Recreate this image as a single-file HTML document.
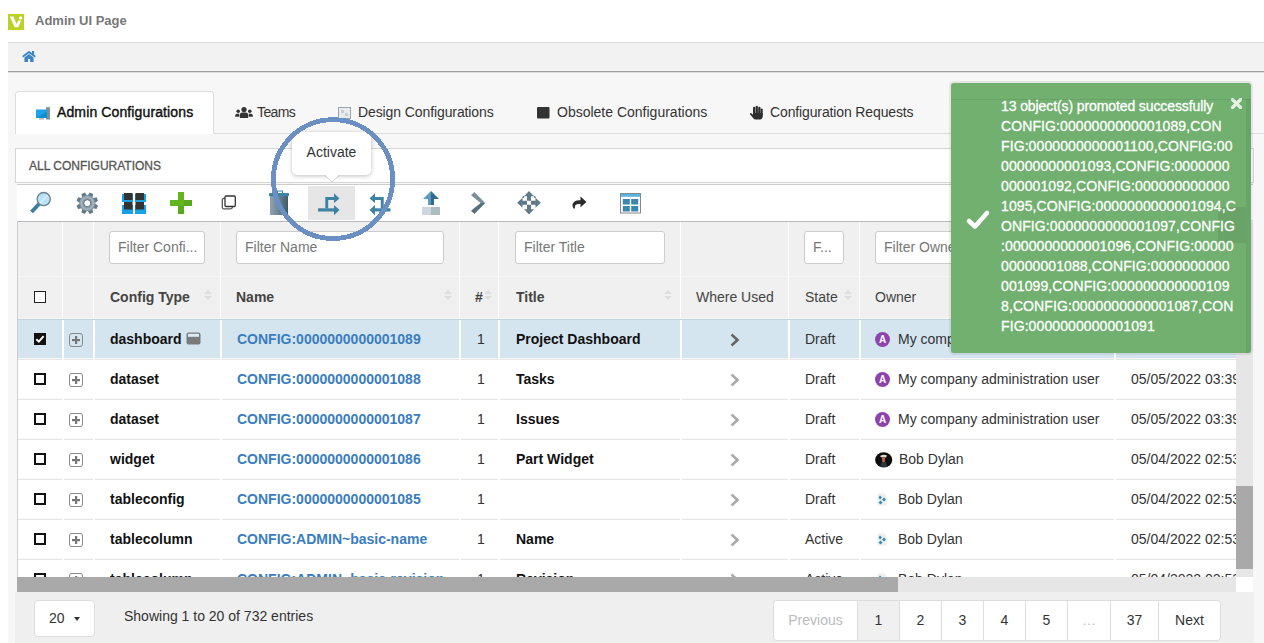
<!DOCTYPE html>
<html><head><meta charset="utf-8">
<style>
*{box-sizing:border-box}
html,body{margin:0;padding:0}
body{width:1264px;height:643px;overflow:hidden;position:relative;background:#fff;font-family:"Liberation Sans",sans-serif;color:#333}
.abs{position:absolute}
#logo{left:8px;top:14px;width:16px;height:16px;background:#bcd02a}
#apptitle{left:35px;top:13px;font-size:13px;font-weight:bold;color:#777}
#main{left:8px;top:42px;width:1256px;height:601px;background:#f7f7f7}
#crumb{left:8px;top:42px;width:1256px;height:28px;background:#f2f2f2;border-top:1px solid #dcdcdc}
.tab{position:absolute;top:91px;height:43px;font-size:14px;color:#333;line-height:43px;white-space:nowrap}
#tabline{left:15px;top:133px;width:1249px;height:1px;background:#ddd}
#tab1{left:15px;width:199px;background:#fff;border:1px solid #ddd;border-bottom:none;border-radius:4px 4px 0 0;height:43px}
#panelhead{left:15px;top:148px;width:1239px;height:35px;background:#fff;border:1px solid #d5d5d5;font-size:12px;color:#555;line-height:35px;padding-left:13px;-webkit-text-stroke:0.3px #555}
#toolbar{left:17px;top:184px;width:1236px;height:37px;background:#fff;border-top:1px solid #ccc;border-bottom:1px solid #e0e0e0}
#tblclip{left:0;top:0;width:1236px;height:577px;overflow:hidden}
.finput{top:231px;height:33px;background:#fff;border:1px solid #ccc;border-radius:3px;font-size:14px;color:#777;line-height:31px;padding-left:8px;white-space:nowrap;overflow:hidden}
.hlab{top:276px;height:43px;line-height:43px;font-size:14px;color:#444;white-space:nowrap}
.sort{top:290px;width:8px;height:10px}
.sort:before{content:"";position:absolute;left:0;top:0;border-left:4px solid transparent;border-right:4px solid transparent;border-bottom:4px solid #ddd}
.sort:after{content:"";position:absolute;left:0;top:6px;border-left:4px solid transparent;border-right:4px solid transparent;border-top:4px solid #ddd}
.cb{width:12px;height:12px;border:2px solid #111;background:#fff}
.cb.on{background:#111}
.exp{width:14px;height:14px;border:1px solid #888;border-radius:3px}
.cell{height:40px;line-height:40px;font-size:14px;color:#333;white-space:nowrap}
.cell.b{font-weight:bold;color:#111}
.cell.lnk{color:#3a7dbf}
.dicon{width:15px;height:12px;background:#777;border-radius:2px}
.chev{width:10px;height:14px}
.avA{width:15px;height:15px;border-radius:50%;background:#8e44ad;color:#fff;font-size:10px;font-weight:bold;text-align:center;line-height:15px}
.avP{width:17px;height:17px;border-radius:50%;background:#222}
.avI{width:10px;height:12px;background:#cde}
.tablab{top:91px;height:43px;line-height:43px;font-size:14px;color:#333;white-space:nowrap}
#pager{left:773px;top:600px;height:41px;display:flex}
.pg{height:41px;border:1px solid #ddd;border-right:none;background:#fff;text-align:center;line-height:39px;font-size:14px;color:#333}
#toast{left:951px;top:83px;width:300px;height:270px;background:#71b06f;border-radius:3px;box-shadow:0 0 0 2px rgba(0,0,0,.07)}
.tl{position:absolute;left:50px;height:20px;line-height:20px;font-size:14px;color:#fff;white-space:nowrap;letter-spacing:0.1px;-webkit-text-stroke:0.3px #fff}

</style></head><body>
<div id="logo" class="abs"><svg width="16" height="16" viewBox="0 0 16 16"><path d="M1.8 2.5 L5.3 2.5 L8.6 10 L10.3 6.6 L13.2 6.6 L10.3 13.3 L6.6 13.3 Z" fill="#fff"/><circle cx="12.5" cy="3.9" r="1.7" fill="#fff"/></svg></div>
<div id="apptitle" class="abs">Admin UI Page</div>
<div id="main" class="abs"></div>
<div id="crumb" class="abs"><svg class="abs" style="left:14px;top:8px" width="14" height="11" viewBox="0 0 14 11"><path d="M0.7 5.8 L7 1 L13.3 5.8" fill="none" stroke="#3d85c6" stroke-width="1.9"/><rect x="10" y="0" width="2.1" height="3.8" fill="#3d85c6"/><path d="M2.4 6.6 L7 3.1 L11.6 6.6 L11.6 11 L8.1 11 L8.1 8 L6 8 L6 11 L2.4 11 Z" fill="#3d85c6"/></svg></div>
<div class="abs" style="left:8px;top:70px;width:1256px;height:1px;background:#f8f8f8"></div><div class="abs" style="left:8px;top:71px;width:1256px;height:1px;background:#a0a0a0"></div><div class="abs" style="left:8px;top:72px;width:1256px;height:1px;background:#dedede"></div>
<div id="tabline" class="abs"></div>
<div id="tab1" class="tab"></div>
<div class="tablab abs" style="left:57px;color:#111;-webkit-text-stroke:0.4px #111;letter-spacing:0.12px">Admin Configurations</div>
<div class="tablab abs" style="left:257px;letter-spacing:-0.6px">Teams</div>
<div class="tablab abs" style="left:358px;letter-spacing:-0.1px">Design Configurations</div>
<div class="tablab abs" style="left:557px">Obsolete Configurations</div>
<div class="tablab abs" style="left:770px;letter-spacing:-0.13px">Configuration Requests</div>
<!-- tab icons -->
<svg class="abs" style="left:35px;top:106px" width="16" height="14" viewBox="0 0 16 14"><rect x="11" y="1.2" width="4" height="12.3" fill="#7f8f99"/><rect x="13.3" y="1.8" width="1" height="1" fill="#7c3"/><rect x="1" y="3.5" width="11" height="8.5" fill="#1ba4ea"/><path d="M1 12 L12 5.5 L12 12 Z" fill="#0d8fd4"/><rect x="4" y="12.3" width="5" height="1.2" fill="#9aa"/></svg>
<svg class="abs" style="left:235px;top:107px" width="18" height="11" viewBox="0 0 18 11"><circle cx="9" cy="2.6" r="2.6" fill="#333"/><path d="M4.8 11 L4.8 7.8 Q5 5.6 7.2 5.6 L10.8 5.6 Q13 5.6 13.2 7.8 L13.2 11 Z" fill="#333"/><circle cx="3.2" cy="4.3" r="1.8" fill="#333"/><circle cx="14.8" cy="4.3" r="1.8" fill="#333"/><path d="M0.2 9.8 L0.2 8.3 Q0.4 6.8 2 6.8 L4.2 6.8 L4.2 9.8 Z M13.8 6.8 L16 6.8 Q17.6 6.8 17.8 8.3 L17.8 9.8 L13.8 9.8 Z" fill="#333"/></svg>
<svg class="abs" style="left:338px;top:107px" width="13" height="12" viewBox="0 0 13 12"><rect x="0.5" y="0.5" width="12" height="11" fill="#e8ecef" stroke="#9aa4ab"/><rect x="3" y="3" width="3" height="3" fill="#c5ccd2"/><rect x="7" y="6" width="3" height="3" fill="#c5ccd2"/></svg>
<svg class="abs" style="left:537px;top:107px" width="13" height="12" viewBox="0 0 13 12"><rect x="0" y="0" width="12.5" height="11.5" rx="1" fill="#333"/></svg>
<svg class="abs" style="left:749px;top:105px" width="14" height="15" viewBox="0 0 14 15"><g fill="#2e2e2e"><rect x="4" y="1.8" width="2.3" height="9" rx="1.1"/><rect x="6.6" y="0.8" width="2.3" height="10" rx="1.1"/><rect x="9.2" y="1.8" width="2.3" height="9" rx="1.1"/><rect x="11.6" y="3.5" width="2.1" height="7.5" rx="1"/><path d="M4 8 L13.7 8 L13.7 11.5 Q13.3 14.5 11 14.5 L6.5 14.5 Q5.2 14.5 4.3 13.3 L1 9.3 Q0.6 8.5 1.3 8.2 Q2.2 7.9 3 8.7 L4 9.8 Z"/></g></svg>
<div id="panelhead" class="abs">ALL CONFIGURATIONS</div>
<div id="toolbar" class="abs"></div>
<div class="abs" style="left:308px;top:186px;width:47px;height:34px;background:#e6e6e6"></div>
<!-- toolbar icons -->
<svg class="abs" style="left:28px;top:190px" width="26" height="26" viewBox="0 0 26 26">
 <line x1="11" y1="14" x2="3.5" y2="22" stroke="#3a7ea0" stroke-width="4" stroke-linecap="butt"/>
 <line x1="11" y1="14" x2="13" y2="12" stroke="#5a7080" stroke-width="2"/>
 <circle cx="15.7" cy="9.1" r="6.6" fill="#b8e2f8" stroke="#6b8090" stroke-width="1.3"/>
 <path d="M12 13 L19.5 5.5" stroke="#dff2fc" stroke-width="1.5"/>
</svg>
<svg class="abs" style="left:75px;top:191px" width="24" height="24" viewBox="0 0 24 24"><g transform="translate(12.3 12.2)"><g fill="#62798a"><path d="M-1.9 -10.8 L1.9 -10.8 L2.7 -6 L-2.7 -6 Z" transform="rotate(22.5)"/><path d="M-1.9 -10.8 L1.9 -10.8 L2.7 -6 L-2.7 -6 Z" transform="rotate(67.5)"/><path d="M-1.9 -10.8 L1.9 -10.8 L2.7 -6 L-2.7 -6 Z" transform="rotate(112.5)"/><path d="M-1.9 -10.8 L1.9 -10.8 L2.7 -6 L-2.7 -6 Z" transform="rotate(157.5)"/><path d="M-1.9 -10.8 L1.9 -10.8 L2.7 -6 L-2.7 -6 Z" transform="rotate(202.5)"/><path d="M-1.9 -10.8 L1.9 -10.8 L2.7 -6 L-2.7 -6 Z" transform="rotate(247.5)"/><path d="M-1.9 -10.8 L1.9 -10.8 L2.7 -6 L-2.7 -6 Z" transform="rotate(292.5)"/><path d="M-1.9 -10.8 L1.9 -10.8 L2.7 -6 L-2.7 -6 Z" transform="rotate(337.5)"/></g><circle r="8" fill="#8a9ca8"/><circle r="6" fill="none" stroke="#a6b4bd" stroke-width="1.6"/><circle r="3.5" fill="#fff" stroke="#52697a" stroke-width="0.9"/></g></svg>
<svg class="abs" style="left:122px;top:193px" width="24" height="22" viewBox="0 0 24 22">
 <rect x="0" y="1" width="11" height="8" fill="#18a0e8"/><rect x="13" y="1" width="11" height="8" fill="#18a0e8"/>
 <rect x="0" y="12" width="11" height="9" fill="#18a0e8"/><rect x="13" y="12" width="11" height="9" fill="#18a0e8"/>
 <rect x="2" y="0" width="8.5" height="7" fill="#333"/><rect x="13.5" y="0" width="8.5" height="7" fill="#333"/>
 <rect x="2" y="9" width="8.5" height="7.5" fill="#333"/><rect x="13.5" y="9" width="8.5" height="7.5" fill="#333"/>
</svg>
<svg class="abs" style="left:170px;top:192px" width="22" height="22" viewBox="0 0 22 22">
 <rect x="8" y="0" width="6" height="22" fill="#62b51f"/><rect x="0" y="8" width="22" height="6" fill="#62b51f"/>
 <path d="M14 8 L22 8 L22 14 L8 14 L8 22 L14 22 Z" fill="#52a318" opacity="0.6"/>
</svg>
<svg class="abs" style="left:220px;top:195px" width="17" height="16" viewBox="0 0 17 16">
 <rect x="2.3" y="3.3" width="10" height="10.5" rx="1.5" fill="none" stroke="#555" stroke-width="1.3"/>
 <rect x="5" y="1" width="10.3" height="10.5" rx="1" fill="#fff" stroke="#333" stroke-width="1.3"/>
</svg>
<svg class="abs" style="left:268px;top:190px" width="22" height="26" viewBox="0 0 22 26">
 <defs><linearGradient id="tg" x1="0" x2="1" y1="0" y2="0"><stop offset="0" stop-color="#8ea3ae"/><stop offset="0.45" stop-color="#6f8794"/><stop offset="1" stop-color="#3f5966"/></linearGradient></defs>
 <rect x="9.5" y="1" width="5" height="2.5" fill="none" stroke="#3f84a6" stroke-width="1"/>
 <rect x="2" y="6" width="18" height="19" fill="url(#tg)"/>
 <rect x="1" y="3" width="20" height="3.3" rx="0.8" fill="#3f84a6"/>
</svg>
<svg class="abs" style="left:316px;top:192px" width="26" height="26" viewBox="0 0 26 26">
 <g fill="#3f83a3">
 <path d="M2 16.3 L18 16.3 L18 19.5 L2 19.5 Z"/><path d="M18 13 L23.5 17.9 L18 23.3 Z"/>
 <path d="M9.3 5 L18 5 L18 8 L12.2 8 L12.2 16.5 L9.3 16.5 Z"/><path d="M18 1.3 L23.5 6.5 L18 11 Z"/>
 </g>
</svg>
<svg class="abs" style="left:367px;top:192px" width="26" height="26" viewBox="0 0 26 26">
 <g fill="#3f83a3" transform="translate(26 0) scale(-1 1)">
 <path d="M2.5 16.3 L18 16.3 L18 19.5 L2.5 19.5 Z"/><path d="M18 13 L23.5 17.9 L18 23.3 Z"/>
 <path d="M9.3 5 L18 5 L18 8 L12.2 8 L12.2 16.5 L9.3 16.5 Z"/><path d="M18 1.3 L23.5 6.5 L18 11 Z"/>
 </g>
</svg>
<svg class="abs" style="left:420px;top:190px" width="22" height="26" viewBox="0 0 22 26">
 <path d="M11 1 L19 9 L14 9 L14 15 L11 15 Z" fill="#2f6d90"/><path d="M11 1 L3 9 L8 9 L8 15 L11 15 Z" fill="#5e9bbf"/>
 <rect x="2" y="17" width="9" height="8" fill="#ccd6dc"/><rect x="11" y="17" width="9" height="8" fill="#adbbc2"/>
</svg>
<svg class="abs" style="left:468px;top:190px" width="22" height="26" viewBox="0 0 22 26">
 <path d="M3 5.2 L6.4 2 L17.2 13 L12.6 13 Z" fill="#7b909c"/><path d="M12.6 13 L17.2 13 L6.4 24 L3 20.8 Z" fill="#56707e"/>
</svg>
<svg class="abs" style="left:515px;top:190px" width="28" height="26" viewBox="0 0 28 26">
 <g transform="translate(14 12.8)" fill="#5f7a89">
  <path d="M0 -11.8 L-5 -6.5 L-2 -6.5 L-2 -2 L2 -2 L2 -6.5 L5 -6.5 Z"/>
  <path d="M0 -11.8 L-5 -6.5 L-2 -6.5 L-2 -2 L2 -2 L2 -6.5 L5 -6.5 Z" transform="rotate(90)"/>
  <path d="M0 -11.8 L-5 -6.5 L-2 -6.5 L-2 -2 L2 -2 L2 -6.5 L5 -6.5 Z" transform="rotate(180)"/>
  <path d="M0 -11.8 L-5 -6.5 L-2 -6.5 L-2 -2 L2 -2 L2 -6.5 L5 -6.5 Z" transform="rotate(270)"/>
  <path d="M-5 -6.5 L-6.5 -5 M5 -6.5 L6.5 -5" stroke="#5f7a89" stroke-width="1.5"/>
 </g>
</svg>
<svg class="abs" style="left:570px;top:195px" width="18" height="16" viewBox="0 0 18 16">
 <path d="M3.5 13.5 Q1 9 4.5 6.5 Q7 5 10.5 5.3 L10.5 1.5 L16.5 7 L10.5 12.3 L10.5 9 Q7 8.6 5.5 10 Q4.5 11 5 13.5 Z" fill="#2b2b2b"/>
</svg>
<svg class="abs" style="left:619px;top:192px" width="23" height="22" viewBox="0 0 23 22">
 <rect x="1.5" y="1.5" width="20" height="19.5" fill="#fff" stroke="#888" stroke-width="1"/>
 <rect x="2" y="2" width="19" height="2.8" fill="#5ab4e0"/>
 <rect x="3.8" y="7" width="7" height="5.5" fill="#3b86b0"/><rect x="12.2" y="7" width="7" height="5.5" fill="#3b86b0"/>
 <rect x="3.8" y="14" width="7" height="5.5" fill="#3b86b0"/><rect x="12.2" y="14" width="7" height="5.5" fill="#3b86b0"/>
</svg>
<div id="tblclip" class="abs"><div class="abs" style="left:18px;top:222px;width:1218px;height:97px;background:#f0f0f0"></div>
<div class="abs" style="left:17px;top:220px;width:1236px;height:1px;background:#fff"></div>
<div class="abs" style="left:17px;top:221px;width:1219px;height:1px;background:#b9b9bf"></div>
<div class="abs" style="left:17px;top:221px;width:1px;height:371px;background:#cfcfcf"></div>
<div class="abs" style="left:62px;top:222px;width:1px;height:97px;background:#fff"></div>
<div class="abs" style="left:93px;top:222px;width:1px;height:97px;background:#fff"></div>
<div class="abs" style="left:220px;top:222px;width:1px;height:97px;background:#fff"></div>
<div class="abs" style="left:459px;top:222px;width:1px;height:97px;background:#fff"></div>
<div class="abs" style="left:498px;top:222px;width:1px;height:97px;background:#fff"></div>
<div class="abs" style="left:680px;top:222px;width:1px;height:97px;background:#fff"></div>
<div class="abs" style="left:788px;top:222px;width:1px;height:97px;background:#fff"></div>
<div class="abs" style="left:859px;top:222px;width:1px;height:97px;background:#fff"></div>
<div class="abs" style="left:1114px;top:222px;width:1px;height:97px;background:#fff"></div>
<div class="abs" style="left:18px;top:276px;width:1218px;height:1px;background:#f7f7f7"></div>
<div class="abs" style="left:18px;top:318px;width:1218px;height:1px;background:#f7f7f7"></div>
<div class="finput abs" style="left:109px;width:96px">Filter Confi...</div>
<div class="finput abs" style="left:236px;width:208px">Filter Name</div>
<div class="finput abs" style="left:515px;width:150px">Filter Title</div>
<div class="finput abs" style="left:804px;width:40px">F...</div>
<div class="finput abs" style="left:875px;width:225px">Filter Owner</div>
<div class="hlab abs" style="left:110px;font-weight:bold;">Config Type</div>
<div class="sort abs" style="left:204px"></div>
<div class="hlab abs" style="left:236px;font-weight:bold;">Name</div>
<div class="sort abs" style="left:444px"></div>
<div class="hlab abs" style="left:475px;font-weight:bold;">#</div>
<div class="sort abs" style="left:484px"></div>
<div class="hlab abs" style="left:516px;font-weight:bold;">Title</div>
<div class="sort abs" style="left:664px"></div>
<div class="hlab abs" style="left:696px;">Where Used</div>
<div class="hlab abs" style="left:805px;">State</div>
<div class="sort abs" style="left:844px"></div>
<div class="hlab abs" style="left:875px;">Owner</div>
<div class="cb abs" style="left:34px;top:291px;border-width:1.6px;border-color:#222"></div>
<div class="abs" style="left:18px;top:320px;width:1218px;height:40px;background:#d4e5f0"></div>
<div class="abs" style="left:18px;top:319px;width:1218px;height:1px;background:#c3d4df"></div>
<div class="abs" style="left:18px;top:359px;width:1218px;height:1px;background:#e6e6e6"></div>
<div class="abs" style="left:18px;top:358px;width:1218px;height:1px;background:#f8f8f8"></div>
<div class="abs" style="left:62px;top:320px;width:2px;height:40px;background:#fff"></div>
<div class="abs" style="left:93px;top:320px;width:2px;height:40px;background:#fff"></div>
<div class="abs" style="left:220px;top:320px;width:2px;height:40px;background:#fff"></div>
<div class="abs" style="left:459px;top:320px;width:2px;height:40px;background:#fff"></div>
<div class="abs" style="left:498px;top:320px;width:2px;height:40px;background:#fff"></div>
<div class="abs" style="left:680px;top:320px;width:2px;height:40px;background:#fff"></div>
<div class="abs" style="left:788px;top:320px;width:2px;height:40px;background:#fff"></div>
<div class="abs" style="left:859px;top:320px;width:2px;height:40px;background:#fff"></div>
<div class="abs" style="left:1114px;top:320px;width:2px;height:40px;background:#fff"></div>
<svg class="abs" style="left:34px;top:333px" width="12" height="12" viewBox="0 0 12 12"><rect width="12" height="12" fill="#111"/><path d="M2.3 6.3 L4.8 8.6 L9.6 3.2" fill="none" stroke="#fff" stroke-width="1.9"/></svg>
<svg class="abs" style="left:69px;top:333px" width="14" height="14" viewBox="0 0 14 14"><rect x="0.5" y="0.5" width="13" height="13" rx="2.5" fill="none" stroke="#888" stroke-width="1"/><rect x="6" y="3" width="2.2" height="8" fill="#777"/><rect x="3" y="6" width="8" height="2.2" fill="#777"/></svg>
<div class="cell b abs" style="left:110px;top:319px">dashboard</div>
<svg class="abs" style="left:186px;top:332px" width="15" height="13" viewBox="0 0 15 13"><rect x="0.5" y="0.5" width="14" height="12" rx="2" fill="#7a7a7a"/><rect x="2" y="1.8" width="11" height="3" fill="#dcecf6"/></svg>
<div class="cell b lnk abs" style="left:237px;top:319px">CONFIG:0000000000001089</div>
<div class="cell abs" style="left:477px;top:319px">1</div>
<div class="cell b abs" style="left:516px;top:319px">Project Dashboard</div>
<svg class="abs" style="left:729px;top:333px" width="12" height="14" viewBox="0 0 12 14"><path d="M2.5 1.5 L8.5 7 L2.5 12.5" fill="none" stroke="#666" stroke-width="2.6"/></svg>
<div class="cell abs" style="left:805px;top:319px">Draft</div>
<div class="avA abs" style="left:875px;top:332px">A</div>
<div class="cell abs" style="left:898px;top:319px">My company administration user</div>
<div class="cell abs" style="left:1131px;top:319px">05/05/2022 03:39</div>
<div class="abs" style="left:18px;top:360px;width:1218px;height:40px;background:#fff"></div>
<div class="abs" style="left:18px;top:399px;width:1218px;height:1px;background:#e6e6e6"></div>
<div class="abs" style="left:18px;top:398px;width:1218px;height:1px;background:#f8f8f8"></div>
<div class="abs" style="left:62px;top:360px;width:2px;height:40px;background:#fff"></div>
<div class="abs" style="left:93px;top:360px;width:2px;height:40px;background:#fff"></div>
<div class="abs" style="left:220px;top:360px;width:2px;height:40px;background:#fff"></div>
<div class="abs" style="left:459px;top:360px;width:2px;height:40px;background:#fff"></div>
<div class="abs" style="left:498px;top:360px;width:2px;height:40px;background:#fff"></div>
<div class="abs" style="left:680px;top:360px;width:2px;height:40px;background:#fff"></div>
<div class="abs" style="left:788px;top:360px;width:2px;height:40px;background:#fff"></div>
<div class="abs" style="left:859px;top:360px;width:2px;height:40px;background:#fff"></div>
<div class="abs" style="left:1114px;top:360px;width:2px;height:40px;background:#fff"></div>
<div class="cb abs" style="left:34px;top:373px"></div>
<svg class="abs" style="left:69px;top:373px" width="14" height="14" viewBox="0 0 14 14"><rect x="0.5" y="0.5" width="13" height="13" rx="2.5" fill="none" stroke="#888" stroke-width="1"/><rect x="6" y="3" width="2.2" height="8" fill="#777"/><rect x="3" y="6" width="8" height="2.2" fill="#777"/></svg>
<div class="cell b abs" style="left:110px;top:359px">dataset</div>
<div class="cell b lnk abs" style="left:237px;top:359px">CONFIG:0000000000001088</div>
<div class="cell abs" style="left:477px;top:359px">1</div>
<div class="cell b abs" style="left:516px;top:359px">Tasks</div>
<svg class="abs" style="left:729px;top:373px" width="12" height="14" viewBox="0 0 12 14"><path d="M2.5 1.5 L8.5 7 L2.5 12.5" fill="none" stroke="#aaa" stroke-width="2.6"/></svg>
<div class="cell abs" style="left:805px;top:359px">Draft</div>
<div class="avA abs" style="left:875px;top:372px">A</div>
<div class="cell abs" style="left:898px;top:359px">My company administration user</div>
<div class="cell abs" style="left:1131px;top:359px">05/05/2022 03:39</div>
<div class="abs" style="left:18px;top:400px;width:1218px;height:40px;background:#fff"></div>
<div class="abs" style="left:18px;top:439px;width:1218px;height:1px;background:#e6e6e6"></div>
<div class="abs" style="left:18px;top:438px;width:1218px;height:1px;background:#f8f8f8"></div>
<div class="abs" style="left:62px;top:400px;width:2px;height:40px;background:#fff"></div>
<div class="abs" style="left:93px;top:400px;width:2px;height:40px;background:#fff"></div>
<div class="abs" style="left:220px;top:400px;width:2px;height:40px;background:#fff"></div>
<div class="abs" style="left:459px;top:400px;width:2px;height:40px;background:#fff"></div>
<div class="abs" style="left:498px;top:400px;width:2px;height:40px;background:#fff"></div>
<div class="abs" style="left:680px;top:400px;width:2px;height:40px;background:#fff"></div>
<div class="abs" style="left:788px;top:400px;width:2px;height:40px;background:#fff"></div>
<div class="abs" style="left:859px;top:400px;width:2px;height:40px;background:#fff"></div>
<div class="abs" style="left:1114px;top:400px;width:2px;height:40px;background:#fff"></div>
<div class="cb abs" style="left:34px;top:413px"></div>
<svg class="abs" style="left:69px;top:413px" width="14" height="14" viewBox="0 0 14 14"><rect x="0.5" y="0.5" width="13" height="13" rx="2.5" fill="none" stroke="#888" stroke-width="1"/><rect x="6" y="3" width="2.2" height="8" fill="#777"/><rect x="3" y="6" width="8" height="2.2" fill="#777"/></svg>
<div class="cell b abs" style="left:110px;top:399px">dataset</div>
<div class="cell b lnk abs" style="left:237px;top:399px">CONFIG:0000000000001087</div>
<div class="cell abs" style="left:477px;top:399px">1</div>
<div class="cell b abs" style="left:516px;top:399px">Issues</div>
<svg class="abs" style="left:729px;top:413px" width="12" height="14" viewBox="0 0 12 14"><path d="M2.5 1.5 L8.5 7 L2.5 12.5" fill="none" stroke="#aaa" stroke-width="2.6"/></svg>
<div class="cell abs" style="left:805px;top:399px">Draft</div>
<div class="avA abs" style="left:875px;top:412px">A</div>
<div class="cell abs" style="left:898px;top:399px">My company administration user</div>
<div class="cell abs" style="left:1131px;top:399px">05/05/2022 03:39</div>
<div class="abs" style="left:18px;top:440px;width:1218px;height:40px;background:#fff"></div>
<div class="abs" style="left:18px;top:479px;width:1218px;height:1px;background:#e6e6e6"></div>
<div class="abs" style="left:18px;top:478px;width:1218px;height:1px;background:#f8f8f8"></div>
<div class="abs" style="left:62px;top:440px;width:2px;height:40px;background:#fff"></div>
<div class="abs" style="left:93px;top:440px;width:2px;height:40px;background:#fff"></div>
<div class="abs" style="left:220px;top:440px;width:2px;height:40px;background:#fff"></div>
<div class="abs" style="left:459px;top:440px;width:2px;height:40px;background:#fff"></div>
<div class="abs" style="left:498px;top:440px;width:2px;height:40px;background:#fff"></div>
<div class="abs" style="left:680px;top:440px;width:2px;height:40px;background:#fff"></div>
<div class="abs" style="left:788px;top:440px;width:2px;height:40px;background:#fff"></div>
<div class="abs" style="left:859px;top:440px;width:2px;height:40px;background:#fff"></div>
<div class="abs" style="left:1114px;top:440px;width:2px;height:40px;background:#fff"></div>
<div class="cb abs" style="left:34px;top:453px"></div>
<svg class="abs" style="left:69px;top:453px" width="14" height="14" viewBox="0 0 14 14"><rect x="0.5" y="0.5" width="13" height="13" rx="2.5" fill="none" stroke="#888" stroke-width="1"/><rect x="6" y="3" width="2.2" height="8" fill="#777"/><rect x="3" y="6" width="8" height="2.2" fill="#777"/></svg>
<div class="cell b abs" style="left:110px;top:439px">widget</div>
<div class="cell b lnk abs" style="left:237px;top:439px">CONFIG:0000000000001086</div>
<div class="cell abs" style="left:477px;top:439px">1</div>
<div class="cell b abs" style="left:516px;top:439px">Part Widget</div>
<svg class="abs" style="left:729px;top:453px" width="12" height="14" viewBox="0 0 12 14"><path d="M2.5 1.5 L8.5 7 L2.5 12.5" fill="none" stroke="#aaa" stroke-width="2.6"/></svg>
<div class="cell abs" style="left:805px;top:439px">Draft</div>
<svg class="abs" style="left:875px;top:452px" width="18" height="16" viewBox="0 0 18 16"><ellipse cx="8.7" cy="7.8" rx="8.6" ry="7.6" fill="#0d0d0d"/><path d="M5 4 Q8.5 1.8 12 3.5 L11 5.5 L6 5.2 Z" fill="#ddd8cc"/><path d="M6.8 5.5 L10 5.6 L9.8 11 L7.5 12 Z" fill="#b8654a"/><path d="M5 15 L6.5 10 L11 10 L12.5 15 Z" fill="#2a3540"/></svg>
<div class="cell abs" style="left:899px;top:439px">Bob Dylan</div>
<div class="cell abs" style="left:1131px;top:439px">05/04/2022 02:53</div>
<div class="abs" style="left:18px;top:480px;width:1218px;height:40px;background:#fff"></div>
<div class="abs" style="left:18px;top:519px;width:1218px;height:1px;background:#e6e6e6"></div>
<div class="abs" style="left:18px;top:518px;width:1218px;height:1px;background:#f8f8f8"></div>
<div class="abs" style="left:62px;top:480px;width:2px;height:40px;background:#fff"></div>
<div class="abs" style="left:93px;top:480px;width:2px;height:40px;background:#fff"></div>
<div class="abs" style="left:220px;top:480px;width:2px;height:40px;background:#fff"></div>
<div class="abs" style="left:459px;top:480px;width:2px;height:40px;background:#fff"></div>
<div class="abs" style="left:498px;top:480px;width:2px;height:40px;background:#fff"></div>
<div class="abs" style="left:680px;top:480px;width:2px;height:40px;background:#fff"></div>
<div class="abs" style="left:788px;top:480px;width:2px;height:40px;background:#fff"></div>
<div class="abs" style="left:859px;top:480px;width:2px;height:40px;background:#fff"></div>
<div class="abs" style="left:1114px;top:480px;width:2px;height:40px;background:#fff"></div>
<div class="cb abs" style="left:34px;top:493px"></div>
<svg class="abs" style="left:69px;top:493px" width="14" height="14" viewBox="0 0 14 14"><rect x="0.5" y="0.5" width="13" height="13" rx="2.5" fill="none" stroke="#888" stroke-width="1"/><rect x="6" y="3" width="2.2" height="8" fill="#777"/><rect x="3" y="6" width="8" height="2.2" fill="#777"/></svg>
<div class="cell b abs" style="left:110px;top:479px">tableconfig</div>
<div class="cell b lnk abs" style="left:237px;top:479px">CONFIG:0000000000001085</div>
<div class="cell abs" style="left:477px;top:479px">1</div>
<div class="cell b abs" style="left:516px;top:479px"></div>
<svg class="abs" style="left:729px;top:493px" width="12" height="14" viewBox="0 0 12 14"><path d="M2.5 1.5 L8.5 7 L2.5 12.5" fill="none" stroke="#aaa" stroke-width="2.6"/></svg>
<div class="cell abs" style="left:805px;top:479px">Draft</div>
<svg class="abs" style="left:877px;top:493px" width="10" height="13" viewBox="0 0 10 13"><path d="M0.5 0.5 L7 0.5 L9.5 3 L9.5 12.5 L0.5 12.5 Z" fill="#eceef0"/><path d="M3 2.5 L5 4.5 L3 6.5 L1.5 4.5 Z M7 4.5 L9 6.5 L7 8.5 L5 6.5 Z M3.5 7.5 L5.5 9.5 L3.5 11.5 L1.5 9.5 Z" fill="#3d8ab8"/></svg>
<div class="cell abs" style="left:898px;top:479px">Bob Dylan</div>
<div class="cell abs" style="left:1131px;top:479px">05/04/2022 02:53</div>
<div class="abs" style="left:18px;top:520px;width:1218px;height:40px;background:#fff"></div>
<div class="abs" style="left:18px;top:559px;width:1218px;height:1px;background:#e6e6e6"></div>
<div class="abs" style="left:18px;top:558px;width:1218px;height:1px;background:#f8f8f8"></div>
<div class="abs" style="left:62px;top:520px;width:2px;height:40px;background:#fff"></div>
<div class="abs" style="left:93px;top:520px;width:2px;height:40px;background:#fff"></div>
<div class="abs" style="left:220px;top:520px;width:2px;height:40px;background:#fff"></div>
<div class="abs" style="left:459px;top:520px;width:2px;height:40px;background:#fff"></div>
<div class="abs" style="left:498px;top:520px;width:2px;height:40px;background:#fff"></div>
<div class="abs" style="left:680px;top:520px;width:2px;height:40px;background:#fff"></div>
<div class="abs" style="left:788px;top:520px;width:2px;height:40px;background:#fff"></div>
<div class="abs" style="left:859px;top:520px;width:2px;height:40px;background:#fff"></div>
<div class="abs" style="left:1114px;top:520px;width:2px;height:40px;background:#fff"></div>
<div class="cb abs" style="left:34px;top:533px"></div>
<svg class="abs" style="left:69px;top:533px" width="14" height="14" viewBox="0 0 14 14"><rect x="0.5" y="0.5" width="13" height="13" rx="2.5" fill="none" stroke="#888" stroke-width="1"/><rect x="6" y="3" width="2.2" height="8" fill="#777"/><rect x="3" y="6" width="8" height="2.2" fill="#777"/></svg>
<div class="cell b abs" style="left:110px;top:519px">tablecolumn</div>
<div class="cell b lnk abs" style="left:237px;top:519px">CONFIG:ADMIN~basic-name</div>
<div class="cell abs" style="left:477px;top:519px">1</div>
<div class="cell b abs" style="left:516px;top:519px">Name</div>
<svg class="abs" style="left:729px;top:533px" width="12" height="14" viewBox="0 0 12 14"><path d="M2.5 1.5 L8.5 7 L2.5 12.5" fill="none" stroke="#aaa" stroke-width="2.6"/></svg>
<div class="cell abs" style="left:805px;top:519px">Active</div>
<svg class="abs" style="left:877px;top:533px" width="10" height="13" viewBox="0 0 10 13"><path d="M0.5 0.5 L7 0.5 L9.5 3 L9.5 12.5 L0.5 12.5 Z" fill="#eceef0"/><path d="M3 2.5 L5 4.5 L3 6.5 L1.5 4.5 Z M7 4.5 L9 6.5 L7 8.5 L5 6.5 Z M3.5 7.5 L5.5 9.5 L3.5 11.5 L1.5 9.5 Z" fill="#3d8ab8"/></svg>
<div class="cell abs" style="left:898px;top:519px">Bob Dylan</div>
<div class="cell abs" style="left:1131px;top:519px">05/04/2022 02:53</div>
<div class="abs" style="left:18px;top:560px;width:1218px;height:40px;background:#fff"></div>
<div class="abs" style="left:18px;top:599px;width:1218px;height:1px;background:#e6e6e6"></div>
<div class="abs" style="left:18px;top:598px;width:1218px;height:1px;background:#f8f8f8"></div>
<div class="abs" style="left:62px;top:560px;width:2px;height:40px;background:#fff"></div>
<div class="abs" style="left:93px;top:560px;width:2px;height:40px;background:#fff"></div>
<div class="abs" style="left:220px;top:560px;width:2px;height:40px;background:#fff"></div>
<div class="abs" style="left:459px;top:560px;width:2px;height:40px;background:#fff"></div>
<div class="abs" style="left:498px;top:560px;width:2px;height:40px;background:#fff"></div>
<div class="abs" style="left:680px;top:560px;width:2px;height:40px;background:#fff"></div>
<div class="abs" style="left:788px;top:560px;width:2px;height:40px;background:#fff"></div>
<div class="abs" style="left:859px;top:560px;width:2px;height:40px;background:#fff"></div>
<div class="abs" style="left:1114px;top:560px;width:2px;height:40px;background:#fff"></div>
<div class="cb abs" style="left:34px;top:573px"></div>
<svg class="abs" style="left:69px;top:573px" width="14" height="14" viewBox="0 0 14 14"><rect x="0.5" y="0.5" width="13" height="13" rx="2.5" fill="none" stroke="#888" stroke-width="1"/><rect x="6" y="3" width="2.2" height="8" fill="#777"/><rect x="3" y="6" width="8" height="2.2" fill="#777"/></svg>
<div class="cell b abs" style="left:110px;top:559px">tablecolumn</div>
<div class="cell b lnk abs" style="left:237px;top:559px">CONFIG:ADMIN~basic-revision</div>
<div class="cell abs" style="left:477px;top:559px">1</div>
<div class="cell b abs" style="left:516px;top:559px">Revision</div>
<svg class="abs" style="left:729px;top:573px" width="12" height="14" viewBox="0 0 12 14"><path d="M2.5 1.5 L8.5 7 L2.5 12.5" fill="none" stroke="#aaa" stroke-width="2.6"/></svg>
<div class="cell abs" style="left:805px;top:559px">Active</div>
<svg class="abs" style="left:877px;top:573px" width="10" height="13" viewBox="0 0 10 13"><path d="M0.5 0.5 L7 0.5 L9.5 3 L9.5 12.5 L0.5 12.5 Z" fill="#eceef0"/><path d="M3 2.5 L5 4.5 L3 6.5 L1.5 4.5 Z M7 4.5 L9 6.5 L7 8.5 L5 6.5 Z M3.5 7.5 L5.5 9.5 L3.5 11.5 L1.5 9.5 Z" fill="#3d8ab8"/></svg>
<div class="cell abs" style="left:898px;top:559px">Bob Dylan</div>
<div class="cell abs" style="left:1131px;top:559px">05/04/2022 02:53</div></div><!-- scrollbars -->
<div class="abs" style="left:17px;top:577px;width:1219px;height:15px;background:#e6e6e6"></div>
<div class="abs" style="left:17px;top:577px;width:881px;height:15px;background:#a9a9a9"></div>
<div class="abs" style="left:1236px;top:222px;width:17px;height:355px;background:#e6e6e6"></div>
<div class="abs" style="left:1236px;top:486px;width:17px;height:83px;background:#a9a9a9"></div>
<div class="abs" style="left:1236px;top:577px;width:17px;height:15px;background:#fff"></div>
<!-- footer -->
<div class="abs" style="left:15px;top:592px;width:1239px;height:51px;background:#efefef"></div>
<div class="abs" style="left:34px;top:600px;width:61px;height:37px;background:#fff;border:1px solid #ddd;border-radius:4px"></div>
<div class="abs" style="left:49px;top:600px;height:37px;line-height:37px;font-size:14px;color:#333">20</div>
<div class="abs" style="left:74px;top:617px;width:0;height:0;border-left:3.5px solid transparent;border-right:3.5px solid transparent;border-top:4px solid #333"></div>
<div class="abs" style="left:124px;top:600px;height:33px;line-height:33px;font-size:14px;color:#333">Showing 1 to 20 of 732 entries</div>
<div id="pager" class="abs">
 <div class="pg" style="width:84px;color:#bbb;border-radius:4px 0 0 4px">Previous</div><div class="pg" style="width:42px;background:#f0f0f0">1</div><div class="pg" style="width:42px">2</div><div class="pg" style="width:42px">3</div><div class="pg" style="width:42px">4</div><div class="pg" style="width:42px">5</div><div class="pg" style="width:43px;color:#bbb">…</div><div class="pg" style="width:48px">37</div><div class="pg" style="width:63px;border-right:1px solid #ddd;border-radius:0 4px 4px 0">Next</div>
</div>
<!-- tooltip -->
<div class="abs" style="left:292px;top:132px;width:79px;height:43px;background:#fff;border-radius:5px;box-shadow:0 1px 4px rgba(0,0,0,.25);font-size:14px;color:#333;text-align:center;line-height:41px">Activate</div>
<svg class="abs" style="left:323px;top:174px" width="18" height="9" viewBox="0 0 18 9"><path d="M1 0.5 L9 8 L17 0.5" fill="#fff" stroke="rgba(0,0,0,.18)" stroke-width="1"/><rect x="0" y="-1" width="18" height="1.5" fill="#fff"/></svg>
<!-- circle -->
<svg class="abs" style="left:263px;top:109px" width="140" height="140" viewBox="0 0 140 140"><ellipse cx="70" cy="70.1" rx="59.6" ry="59.4" fill="none" stroke="#6a8fc2" stroke-width="4.8" shape-rendering="crispEdges"/></svg>
<!-- toast -->
<div id="toast" class="abs">
 <svg class="abs" style="left:14px;top:125px" width="26" height="22" viewBox="0 0 26 22"><path d="M4 13 L10 18.5 L22 5" fill="none" stroke="#fff" stroke-width="4.6" stroke-linecap="round" stroke-linejoin="round"/></svg>
 <svg class="abs" style="left:280px;top:15px" width="11" height="11" viewBox="0 0 11 11"><path d="M1.5 1.5 L9.5 9.5 M9.5 1.5 L1.5 9.5" stroke="#e6f1e6" stroke-width="3.2" stroke-linecap="round"/></svg>
 <div class="abs" style="left:0;top:16px;width:300px;height:1px;background:rgba(0,0,0,.07)"></div>
 <div class="abs" style="left:295px;top:16px;width:5px;height:254px;background:rgba(0,0,0,.06)"></div>
 <div class="abs" style="left:267px;top:124px;width:28px;height:36px;background:rgba(0,0,0,.07);border-radius:3px 0 0 3px"></div>
 <div class="tl" style="top:13px;letter-spacing:-0.1px">13 object(s) promoted successfully</div>
 <div class="tl" style="top:33px">CONFIG:0000000000001089,CON</div>
 <div class="tl" style="top:53px">FIG:0000000000001100,CONFIG:00</div>
 <div class="tl" style="top:73px">00000000001093,CONFIG:0000000</div>
 <div class="tl" style="top:93px">000001092,CONFIG:000000000000</div>
 <div class="tl" style="top:113px">1095,CONFIG:0000000000001094,C</div>
 <div class="tl" style="top:133px">ONFIG:0000000000001097,CONFIG</div>
 <div class="tl" style="top:153px">:0000000000001096,CONFIG:00000</div>
 <div class="tl" style="top:173px">00000001088,CONFIG:0000000000</div>
 <div class="tl" style="top:193px">001099,CONFIG:000000000000109</div>
 <div class="tl" style="top:213px">8,CONFIG:0000000000001087,CON</div>
 <div class="tl" style="top:233px">FIG:0000000000001091</div>
</div>
</body></html>
